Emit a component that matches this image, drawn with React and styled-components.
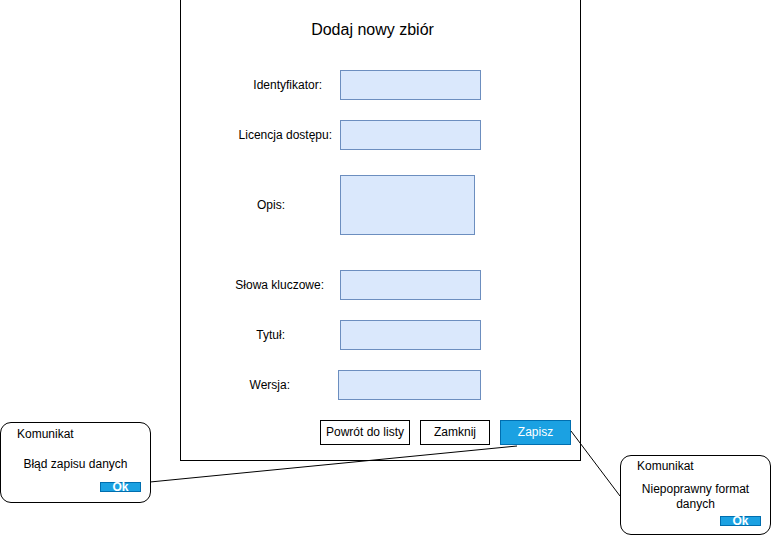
import React from "react";
import styled, { createGlobalStyle } from "styled-components";

const GlobalStyle = createGlobalStyle`
  html, body {
    margin: 0;
    padding: 0;
    background: #ffffff;
  }
  body {
    font-family: "Liberation Sans", Helvetica, Arial, sans-serif;
    color: #000000;
  }
`;

const Canvas = styled.div`
  position: relative;
  width: 772px;
  height: 537px;
  overflow: hidden;
  background: #ffffff;
`;

const Connectors = styled.svg`
  position: absolute;
  left: 0;
  top: 0;
  pointer-events: none;
`;

const Dialog = styled.section`
  position: absolute;
  left: 180px;
  top: -1px;
  width: 401px;
  height: 462px;
  box-sizing: border-box;
  border: 1px solid #000000;
  background: #ffffff;
  display: flex;
  flex-direction: column;
`;

const Title = styled.h1`
  margin: 20px 0 0;
  padding-right: 16px;
  font-size: 16px;
  font-weight: normal;
  line-height: 20px;
  text-align: center;
`;

const Form = styled.div`
  display: flex;
  flex-direction: column;
  margin-top: 30px;
`;

const Row = styled.div`
  display: grid;
  grid-template-columns: 159px 1fr;
  margin-top: ${(p) => p.$gap || 0}px;
  height: ${(p) => p.$h || 30}px;
`;

const Label = styled.label`
  display: flex;
  align-items: center;
  justify-content: flex-end;
  padding-right: ${(p) => p.$pad}px;
  font-size: 12px;
  white-space: nowrap;
`;

const Field = styled.div`
  box-sizing: border-box;
  width: ${(p) => p.$w || 141}px;
  height: 100%;
  margin-left: ${(p) => p.$shift || 0}px;
  background: #dae8fc;
  border: 1px solid #6c8ebf;
`;

const Actions = styled.div`
  display: flex;
  gap: 10px;
  margin-top: 20px;
  padding-left: 139px;
`;

const Button = styled.button`
  box-sizing: border-box;
  width: ${(p) => p.$w}px;
  height: 25px;
  padding: 0;
  font-family: inherit;
  font-size: 12px;
  line-height: 23px;
  border: 1px solid ${(p) => (p.$primary ? "#006eaf" : "#000000")};
  background: ${(p) => (p.$primary ? "#1ba1e2" : "#ffffff")};
  color: ${(p) => (p.$primary ? "#ffffff" : "#000000")};
`;

const MessageBox = styled.div`
  position: absolute;
  left: ${(p) => p.$x}px;
  top: ${(p) => p.$y}px;
  width: ${(p) => p.$w}px;
  height: ${(p) => p.$h}px;
  box-sizing: border-box;
  border: 1px solid #000000;
  border-radius: 11px;
  background: #ffffff;
  display: flex;
  flex-direction: column;
`;

const MessageTitle = styled.div`
  font-size: 12px;
  line-height: 14px;
  margin: ${(p) => p.$top}px 0 0 16px;
`;

const MessageText = styled.div`
  font-size: 12px;
  line-height: 15px;
  text-align: center;
  align-self: center;
  width: ${(p) => p.$w}px;
  margin-top: ${(p) => p.$top}px;
  height: ${(p) => p.$h}px;
`;

const OkButton = styled.div`
  box-sizing: border-box;
  width: 41px;
  height: 10px;
  margin-left: 99px;
  margin-top: ${(p) => p.$top}px;
  background: #1ba1e2;
  border: 1px solid #006eaf;
  color: #ffffff;
  font-size: 12px;
  font-weight: bold;
  line-height: 8px;
  text-align: center;
`;

const fields = [
  { label: "Identyfikator:", pad: 18, gap: 0 },
  { label: "Licencja dostępu:", pad: 8, gap: 20 },
  { label: "Opis:", pad: 55, gap: 25, h: 60, w: 135 },
  { label: "Słowa kluczowe:", pad: 16, gap: 35 },
  { label: "Tytuł:", pad: 55, gap: 20 },
  { label: "Wersja:", pad: 50, gap: 20, shift: -2, w: 143 },
];

export default function App() {
  return (
    <>
      <GlobalStyle />
      <Canvas>
        <Dialog>
          <Title>Dodaj nowy zbiór</Title>
          <Form>
            {fields.map((f) => (
              <Row key={f.label} $gap={f.gap} $h={f.h}>
                <Label $pad={f.pad}>{f.label}</Label>
                <Field $w={f.w} $shift={f.shift} />
              </Row>
            ))}
            <Actions>
              <Button $w={90}>Powrót do listy</Button>
              <Button $w={70}>Zamknij</Button>
              <Button $w={71} $primary>
                Zapisz
              </Button>
            </Actions>
          </Form>
        </Dialog>

        <MessageBox $x={0} $y={422} $w={151} $h={81}>
          <MessageTitle $top={4}>Komunikat</MessageTitle>
          <MessageText $w={140} $top={16} $h={15}>
            Błąd zapisu danych
          </MessageText>
          <OkButton $top={10}>Ok</OkButton>
        </MessageBox>

        <MessageBox $x={620} $y={455} $w={151} $h={80}>
          <MessageTitle $top={3}>Komunikat</MessageTitle>
          <MessageText $w={120} $top={9} $h={30}>
            Niepoprawny format danych
          </MessageText>
          <OkButton $top={4}>Ok</OkButton>
        </MessageBox>

        <Connectors width="772" height="537" viewBox="0 0 772 537">
          <line x1="517" y1="446" x2="150" y2="482" stroke="#000" strokeWidth="1" />
          <line x1="571" y1="431" x2="620" y2="496" stroke="#000" strokeWidth="1" />
        </Connectors>
      </Canvas>
    </>
  );
}
